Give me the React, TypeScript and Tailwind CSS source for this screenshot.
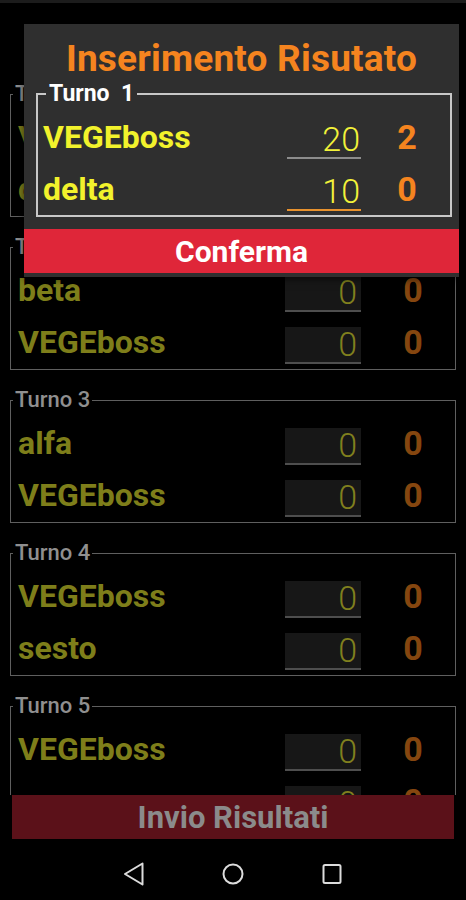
import React from "react";

const groups = [
  { turno: 1, players: ["VEGEboss", "delta"] },
  { turno: 2, players: ["beta", "VEGEboss"] },
  { turno: 3, players: ["alfa", "VEGEboss"] },
  { turno: 4, players: ["VEGEboss", "sesto"] },
  { turno: 5, players: ["VEGEboss", ""] },
];

// dimmed row behind the dialog
function ListRow({ name }: { name: string }) {
  return (
    <div className="flex h-[52px] items-center pl-[7px] pr-[12px]">
      <span className="flex-1 text-[32px] font-bold leading-none text-[#7e7e1a]">{name}</span>
      <div className="mt-[7px] flex h-[37px] w-[76px] justify-end border-b-2 border-[#4e4e4e] bg-[#171717] pr-[4px]">
        <span className="text-[34px] font-light leading-[34px] text-[#80801e]">0</span>
      </div>
      <span className="ml-[22px] w-[60px] text-center text-[34px] font-bold leading-none text-[#85460f]">0</span>
    </div>
  );
}

function DialogRow({ name, value, score, focused }: { name: string; value: string; score: string; focused?: boolean }) {
  return (
    <div className="flex h-[52px] items-center pl-[5px] pr-[17px]">
      <span className="flex-1 text-[32px] font-bold leading-none text-[#f2f22c]">{name}</span>
      <div
        className={
          focused
            ? "mt-[7px] flex h-[37px] w-[74px] justify-end border-b-2 border-[#e8922e] pr-[1px]"
            : "mt-[7px] flex h-[37px] w-[74px] justify-end border-b-2 border-[#8c8c8c] pr-[1px]"
        }
      >
        <span className="text-[34px] font-light leading-[34px] text-[#f2f23a]">{value}</span>
      </div>
      <span className="ml-[20px] w-[52px] text-center text-[34px] font-bold leading-none text-[#f5841f]">{score}</span>
    </div>
  );
}

function BackIcon() {
  return (
    <svg width="24" height="24" viewBox="0 0 24 24" fill="none" stroke="#dcdcdc" strokeWidth="2" strokeLinejoin="round">
      <polygon points="20.5,1.5 3,12 20.5,22.5" />
    </svg>
  );
}

function HomeIcon() {
  return (
    <svg width="24" height="24" viewBox="0 0 24 24" fill="none" stroke="#dcdcdc" strokeWidth="2">
      <circle cx="12" cy="12" r="9.5" />
    </svg>
  );
}

function RecentsIcon() {
  return (
    <svg width="24" height="24" viewBox="0 0 24 24" fill="none" stroke="#dcdcdc" strokeWidth="2">
      <rect x="3.5" y="3" width="17" height="18" rx="1.5" />
    </svg>
  );
}

export default function App() {
  return (
    <div className="relative flex h-[900px] w-full flex-col overflow-hidden bg-black font-['Roboto',sans-serif]">
      {/* status bar */}
      <div className="h-[24px] shrink-0 border-t-[3px] border-[#1c1c1c] bg-black" />

      {/* results list */}
      <div className="flex-1 overflow-hidden pt-[57px]">
        {groups.map((g) => (
          <fieldset key={g.turno} className="mx-[10px] mb-[17px] border border-[#5f5f5f] pb-[1px] pt-[4px]">
            <legend className="ml-[2px] px-[2px] text-[22px] font-medium leading-[26px] text-[#8f8f8f]">Turno {g.turno}</legend>
            {g.players.map((p, i) => (
              <ListRow key={i} name={p} />
            ))}
          </fieldset>
        ))}
      </div>

      <button className="mx-[12px] h-[44px] shrink-0 bg-[#5b1119] text-[31px] font-bold text-[#8b8b8b]">Invio Risultati</button>

      {/* nav bar */}
      <div className="mt-[9px] flex h-[52px] shrink-0 items-center justify-center gap-[75px]">
        <BackIcon />
        <HomeIcon />
        <RecentsIcon />
      </div>

      {/* dialog */}
      <div className="absolute left-[24px] top-[24px] w-[435px] bg-[#2f2f2f] pb-[4px] shadow-[0_2px_8px_rgba(0,0,0,0.6)]">
        <h1 className="pt-[13px] text-center text-[37px] font-bold leading-[43px] tracking-[0.2px] text-[#f5841f]">Inserimento Risutato</h1>
        <fieldset className="ml-[12px] mr-[7px] mt-[2px] border-2 border-[#c8c8c8] pt-[5px]">
          <legend className="ml-[8px] whitespace-pre px-[3px] text-[23px] font-bold leading-[24px] text-white">Turno  1</legend>
          <DialogRow name="VEGEboss" value="20" score="2" />
          <DialogRow name="delta" value="10" score="0" focused />
        </fieldset>
        <button className="mt-[12px] block h-[44px] w-full bg-[#df2639] text-[30px] font-bold text-white">Conferma</button>
      </div>
    </div>
  );
}
